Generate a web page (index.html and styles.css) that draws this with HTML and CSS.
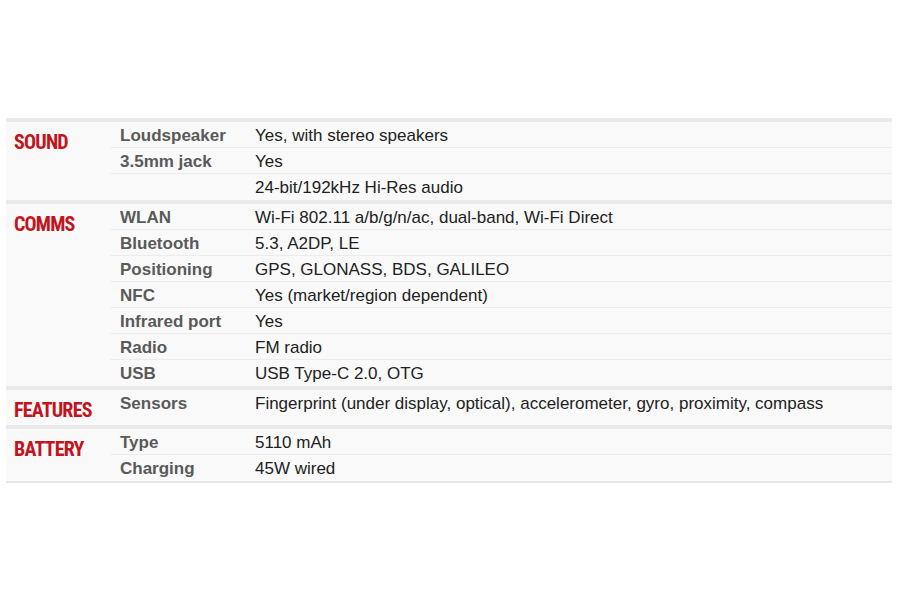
FILE: index.html
```html
<!DOCTYPE html>
<html>
<head>
<meta charset="utf-8">
<link rel="stylesheet" href="styles.css">
</head>
<body>
<div class="specs">
  <div class="section">
    <div class="label">SOUND</div>
    <div class="rows">
      <div class="row"><div class="field">Loudspeaker</div><div class="value">Yes, with stereo speakers</div></div>
      <div class="row"><div class="field">3.5mm jack</div><div class="value">Yes</div></div>
      <div class="row"><div class="field"></div><div class="value">24-bit/192kHz Hi-Res audio</div></div>
    </div>
  </div>
  <div class="section">
    <div class="label">COMMS</div>
    <div class="rows">
      <div class="row"><div class="field">WLAN</div><div class="value">Wi-Fi 802.11 a/b/g/n/ac, dual-band, Wi-Fi Direct</div></div>
      <div class="row"><div class="field">Bluetooth</div><div class="value">5.3, A2DP, LE</div></div>
      <div class="row"><div class="field">Positioning</div><div class="value">GPS, GLONASS, BDS, GALILEO</div></div>
      <div class="row"><div class="field">NFC</div><div class="value">Yes (market/region dependent)</div></div>
      <div class="row"><div class="field">Infrared port</div><div class="value">Yes</div></div>
      <div class="row"><div class="field">Radio</div><div class="value">FM radio</div></div>
      <div class="row"><div class="field">USB</div><div class="value">USB Type-C 2.0, OTG</div></div>
    </div>
  </div>
  <div class="section">
    <div class="label">FEATURES</div>
    <div class="rows">
      <div class="row"><div class="field">Sensors</div><div class="value">Fingerprint (under display, optical), accelerometer, gyro, proximity, compass</div></div>
    </div>
  </div>
  <div class="section">
    <div class="label">BATTERY</div>
    <div class="rows">
      <div class="row"><div class="field">Type</div><div class="value">5110 mAh</div></div>
      <div class="row"><div class="field">Charging</div><div class="value">45W wired</div></div>
    </div>
  </div>
</div>
</body>
</html>
```
FILE: styles.css
```css
html, body {
  margin: 0;
  padding: 0;
  background: #ffffff;
}
body {
  width: 900px;
  height: 600px;
  overflow: hidden;
}
.specs {
  margin: 118px 0 0 6px;
  width: 886px;
  background: #f9f9f9;
  border-bottom: 2px solid #e6e6e6;
  font-family: "Liberation Sans", Arial, sans-serif;
}
.section {
  display: flex;
  border-top: 4px solid #eaeaea;
}
.label {
  width: 96px;
  flex: none;
  padding: 10px 0 5px 8px;
  font-family: "Roboto Condensed", "Liberation Sans Narrow", "DejaVu Sans Condensed", sans-serif;
  font-weight: 700;
  font-size: 20px;
  line-height: 20px;
  letter-spacing: -0.8px;
  color: #c2141d;
}
.rows {
  flex: 1;
  display: flex;
  flex-direction: column;
}
.row {
  display: flex;
  height: 26px;
  padding-top: 1px;
  line-height: 25px;
  font-size: 17px;
  border-bottom: 1px solid #ececec;
  box-sizing: border-box;
}
.row:last-child {
  border-bottom: none;
}
.field {
  width: 135px;
  flex: none;
  padding-left: 10px;
  font-weight: 700;
  color: #5a5a5a;
}
.value {
  color: #222222;
  white-space: nowrap;
}
```
